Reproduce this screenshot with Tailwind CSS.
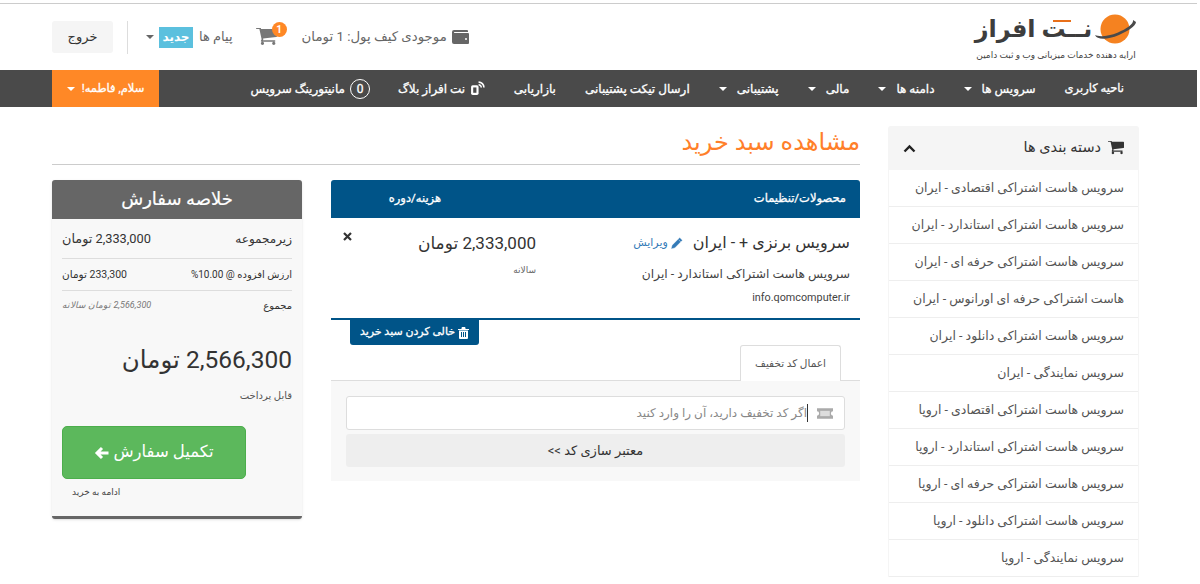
<!DOCTYPE html>
<html lang="fa" dir="rtl">
<head>
    <meta charset="UTF-8">
    <title>مشاهده سبد خرید - نت افراز</title>
    <script src="https://cdn.jsdelivr.net/npm/@tailwindcss/browser@4"></script>
</head>
<body class="bg-white h-[584px] overflow-hidden font-['Roboto','DejaVu_Sans',sans-serif] text-[#333]">
<div class="w-[1197px] h-[584px] overflow-hidden border-t border-[#ccc] mt-[3px] mr-auto ml-0">

    <!-- Top header -->
    <header class="h-[66px] pr-[58px] pl-[52px] flex items-center justify-between">
        <div class="w-[166px] flex flex-col items-center mt-[-1px]">
            <div class="flex items-center gap-[3px] h-[34px] whitespace-nowrap">
                <svg width="42" height="30" viewBox="0 0 42 30" class="shrink-0">
                    <circle cx="20" cy="15" r="14.500" fill="#f58220"/>
                    <path d="M0 21C2 26 12 26 24 21 32 17.500 41 12 41 8L38 6C39 10 31 15 23 18.500 13 22.500 4 23 0 21Z" fill="#4a4a4a"/>
                </svg>
                <span class="relative text-[24px] leading-none font-bold text-[#3d3d3d]">نــت افراز<span class="absolute top-[3px] right-[21px] w-[18px] h-[2px] bg-[#e8701a]"></span></span>
            </div>
            <span class="text-[9px] leading-[14px] text-[#444] mt-[2px] whitespace-nowrap">ارایه دهنده خدمات میزبانی وب و ثبت دامین</span>
        </div>
        <div class="flex items-center text-[13px] text-[#666]">
            <div class="flex items-center gap-[5px]">
                <svg width="17" height="16" viewBox="0 0 17 16"><path d="M2 1h13a1 1 0 0 1 1 1v1H2.500a.5.5 0 0 0 0 1H16a1 1 0 0 1 1 1v9a1 1 0 0 1-1 1H2a2 2 0 0 1-2-2V3a2 2 0 0 1 2-2z" fill="#666"/><circle cx="14" cy="10" r="1" fill="#fff"/></svg>
                <span class="text-[13.300px]">موجودی کیف پول: 1 تومان</span>
            </div>
            <div class="relative mr-[25px] w-[21px] h-[18px]">
                <svg width="21" height="18" viewBox="0 240 1664 1310"><path fill="#777" d="M640 1408q0 52-38 90t-90 38-90-38-38-90 38-90 90-38 90 38 38 90zm896 0q0 52-38 90t-90 38-90-38-38-90 38-90 90-38 90 38 38 90zm128-1088v512q0 24-16.500 42.500t-40.500 21.500l-1044 122q13 60 13 70 0 16-24 64h920q26 0 45 19t19 45-19 45-45 19h-1024q-26 0-45-19t-19-45q0-11 8-31.500t16-36 21.500-40 15.500-29.500l-177-823h-204q-26 0-45-19t-19-45 19-45 45-19h256q16 0 28.500 6.500t19.500 15.500 13 24.500 8 26 5.500 29.500 4.500 26h1201q26 0 45 19t19 45z"/></svg>
                <span class="absolute -top-[6px] -right-[10px] w-[15px] h-[15px] rounded-full bg-[#ff8826] text-white text-[10px] font-bold leading-[15px] text-center">1</span>
            </div>
            <span class="mr-[23px]">پیام ها</span>
            <span class="mr-[6px] w-[34px] h-[21px] bg-[#5bc0de] text-white text-[12px] font-bold leading-[21px] text-center">جدید</span>
            <span class="mr-[5px] w-0 h-0 border-x-[4px] border-x-transparent border-t-[4px] border-t-[#666]"></span>
            <span class="mr-[18px] w-px h-[33px] bg-[#ddd]"></span>
            <a class="mr-[14px] w-[61px] h-[32px] rounded-[3px] bg-[#f5f5f5] text-[#333] leading-[32px] text-center">خروج</a>
        </div>
    </header>

    <!-- Main nav -->
    <nav class="h-[37px] bg-[#4a4a4a] pr-[58px] pl-[52px] flex items-stretch justify-between text-white text-[12px] [-webkit-text-stroke:0.3px_white] whitespace-nowrap">
        <ul class="flex items-center">
            <li class="pr-[15px] pl-[14.500px] text-[11.500px]">ناحیه کاربری</li>
            <li class="px-[14.500px] flex items-center gap-[10px]">سرویس ها<span class="w-0 h-0 border-x-[4px] border-x-transparent border-t-[4px] border-t-white"></span></li>
            <li class="px-[14.500px] flex items-center gap-[10px]">دامنه ها<span class="w-0 h-0 border-x-[4px] border-x-transparent border-t-[4px] border-t-white"></span></li>
            <li class="px-[14.500px] flex items-center gap-[10px]">مالی<span class="w-0 h-0 border-x-[4px] border-x-transparent border-t-[4px] border-t-white"></span></li>
            <li class="px-[14.500px] flex items-center gap-[10px]">پشتیبانی<span class="w-0 h-0 border-x-[4px] border-x-transparent border-t-[4px] border-t-white"></span></li>
            <li class="px-[14.500px]">ارسال تیکت پشتیبانی</li>
            <li class="px-[14.500px]">بازاریابی</li>
            <li class="px-[14px] flex items-center gap-[5px]">
                <svg width="15" height="15" viewBox="0 0 14 14"><rect x="1" y="4" width="7" height="9" rx="1.500" fill="#fff" stroke="none"/><rect x="3" y="6" width="3" height="5" fill="#4a4a4a" stroke="none"/><path d="M8 1a5 5 0 0 1 5 5M8 3.500A2.500 2.500 0 0 1 10.500 6" fill="none" stroke="#fff" stroke-width="1.500"/></svg>
                نت افراز بلاگ
            </li>
            <li class="px-[14px] flex items-center gap-[5px]">
                <span class="w-[20px] h-[20px] rounded-full border border-white text-center leading-[18px]">0</span>
                مانیتورینگ سرویس
            </li>
        </ul>
        <div class="w-[107px] bg-[#ff8826] flex items-center justify-center gap-[7px] text-[11.500px]">
            سلام, فاطمه!
            <span class="w-0 h-0 border-x-[4px] border-x-transparent border-t-[4px] border-t-white"></span>
        </div>
    </nav>

    <!-- Page body -->
    <div class="pr-[58px] pl-[52px] pt-[19px] flex gap-[28px]">

        <!-- Sidebar -->
        <aside class="w-[251px] shrink-0">
            <div class="h-[44px] bg-[#f5f5f5] rounded-t-[3px] flex items-center justify-between px-[15px] text-[14.500px] text-[#333]">
                <div class="flex items-center gap-[7px]">
                    <svg width="16" height="14" viewBox="0 240 1664 1310"><path fill="#333" d="M640 1408q0 52-38 90t-90 38-90-38-38-90 38-90 90-38 90 38 38 90zm896 0q0 52-38 90t-90 38-90-38-38-90 38-90 90-38 90 38 38 90zm128-1088v512q0 24-16.500 42.500t-40.500 21.500l-1044 122q13 60 13 70 0 16-24 64h920q26 0 45 19t19 45-19 45-45 19h-1024q-26 0-45-19t-19-45q0-11 8-31.500t16-36 21.500-40 15.500-29.500l-177-823h-204q-26 0-45-19t-19-45 19-45 45-19h256q16 0 28.500 6.500t19.500 15.500 13 24.500 8 26 5.500 29.500 4.500 26h1201q26 0 45 19t19 45z"/></svg>
                    <span>دسته بندی ها</span>
                </div>
                <svg width="13" height="9" viewBox="0 0 13 9"><path d="M1.500 7.500 6.500 2.500l5 5" fill="none" stroke="#222" stroke-width="2.400"/></svg>
            </div>
            <ul class="text-[12.500px] text-[#555] border-x border-[#f5f5f5]">
                <li class="h-[37px] leading-[36px] px-[14px] border-b border-[#eee] whitespace-nowrap">سرویس هاست اشتراکی اقتصادی - ایران</li>
                <li class="h-[37px] leading-[36px] px-[14px] border-b border-[#eee] whitespace-nowrap">سرویس هاست اشتراکی استاندارد - ایران</li>
                <li class="h-[37px] leading-[36px] px-[14px] border-b border-[#eee] whitespace-nowrap">سرویس هاست اشتراکی حرفه ای - ایران</li>
                <li class="h-[37px] leading-[36px] px-[14px] border-b border-[#eee] whitespace-nowrap">هاست اشتراکی حرفه ای اورانوس - ایران</li>
                <li class="h-[37px] leading-[36px] px-[14px] border-b border-[#eee] whitespace-nowrap">سرویس هاست اشتراکی دانلود - ایران</li>
                <li class="h-[37px] leading-[36px] px-[14px] border-b border-[#eee] whitespace-nowrap">سرویس نمایندگی - ایران</li>
                <li class="h-[37px] leading-[36px] px-[14px] border-b border-[#eee] whitespace-nowrap">سرویس هاست اشتراکی اقتصادی - اروپا</li>
                <li class="h-[37px] leading-[36px] px-[14px] border-b border-[#eee] whitespace-nowrap">سرویس هاست اشتراکی استاندارد - اروپا</li>
                <li class="h-[37px] leading-[36px] px-[14px] border-b border-[#eee] whitespace-nowrap">سرویس هاست اشتراکی حرفه ای - اروپا</li>
                <li class="h-[37px] leading-[36px] px-[14px] border-b border-[#eee] whitespace-nowrap">سرویس هاست اشتراکی دانلود - اروپا</li>
                <li class="h-[37px] leading-[36px] px-[14px] border-b border-[#eee] whitespace-nowrap">سرویس نمایندگی - اروپا</li>
            </ul>
        </aside>

        <main class="w-[808px] shrink-0">
            <h1 class="h-[39px] border-b border-[#ccc] text-[24px] leading-[32px] text-[#ff7f2a]">مشاهده سبد خرید</h1>

            <div class="mt-[15px] flex gap-[29px]">
                <!-- Cart -->
                <section class="w-[529px] shrink-0">
                    <div class="h-[38px] bg-[#005488] rounded-t-[3px] flex items-center text-white text-[11.500px] [-webkit-text-stroke:0.3px_white]">
                        <span class="w-[419px] pr-[14px]">محصولات/تنظیمات</span>
                        <span>هزینه/دوره</span>
                    </div>
                    <div class="h-[102px] border-b-2 border-[#005488] flex pt-[15px]">
                        <div class="w-[324px] pr-[10px]">
                            <div class="flex items-center h-[20px]">
                                <span class="text-[16px]">سرویس برنزی + - ایران</span>
                                <span class="mr-[10px] flex items-center gap-[3px] text-[11px] text-[#337ab7]">
                                    <svg width="12" height="12" viewBox="0 0 11 11"><path d="M8 .5 10.500 3l-7 7L0 11l1-3.500zM7 2.500 9 4.500" fill="#337ab7" stroke="#fff" stroke-width=".4"/></svg>
                                    ویرایش
                                </span>
                            </div>
                            <p class="text-[12.250px] leading-[18px] mt-[12px] text-[#444]">سرویس هاست اشتراکی استاندارد - ایران</p>
                            <p dir="ltr" class="text-right text-[10.800px] leading-[14px] mt-[8px] text-[#444]">info.qomcomputer.ir</p>
                        </div>
                        <div class="w-[192px]">
                            <div class="text-[17px] leading-[20px]">2,333,000 تومان</div>
                            <div class="text-[9px] leading-[12px] mt-[11px] text-[#666]">سالانه</div>
                        </div>
                        <svg class="mr-[-8px] mt-[-1px]" width="9" height="9" viewBox="0 0 9 9"><path d="M1 1l7 7M8 1 1 8" stroke="#333" stroke-width="2.200"/></svg>
                    </div>
                    <div class="flex justify-end pl-[19px]">
                        <button class="w-[129px] h-[25px] bg-[#005488] rounded-b-[3px] text-white text-[11px] [-webkit-text-stroke:0.3px_white] flex items-center justify-center gap-[3px]">
                            <svg width="11" height="12" viewBox="0 0 11 12"><path d="M0 2h11v1H0zM3.500 1 4 0h3l.500 1v1h-4zM1 3.500h9V11a1 1 0 0 1-1 1H2a1 1 0 0 1-1-1z" fill="#fff" stroke="none"/><path d="M3.500 5v5M5.500 5v5M7.500 5v5" stroke="#005488"/></svg>
                            خالی کردن سبد خرید
                        </button>
                    </div>
                    <div class="h-[36px] border-b border-[#ddd] pr-[19px] flex">
                        <span class="w-[101px] h-[36px] bg-white border border-[#ddd] border-b-0 rounded-t-[3px] text-[10.500px] leading-[35px] text-center text-[#555]">اعمال کد تخفیف</span>
                    </div>
                    <div class="h-[100px] bg-[#f8f8f8] px-[15px] pt-[15px]">
                        <div class="h-[34px] bg-white border border-[#ddd] rounded-[3px] flex items-center pr-[11px] gap-[9px] text-[12px] text-[#888]">
                            <svg width="16" height="11" viewBox="0 0 15 10"><path d="M0 0h15v3a2 2 0 0 0 0 4v3H0V7a2 2 0 0 0 0-4z" fill="#aaa"/><rect x="3" y="2.500" width="9" height="5" fill="#ddd"/></svg>
                            <span class="w-px h-[18px] bg-[#333] -ml-[9px]"></span>
                            <span>اگر کد تخفیف دارید، آن را وارد کنید</span>
                        </div>
                        <button class="w-full h-[33px] mt-[4px] bg-[#eee] rounded-[3px] text-[13px] text-[#333]">معتبر سازی کد &gt;&gt;</button>
                    </div>
                </section>

                <!-- Order summary -->
                <section class="w-[250px] h-[339px] shrink-0 bg-[#f8f8f8] border-b-[3px] border-[#666] rounded-[3px] shadow-sm">
                    <h2 class="h-[39px] bg-[#666] rounded-t-[3px] text-white text-[18px] [-webkit-text-stroke:0.2px_white] leading-[37px] text-center">خلاصه سفارش</h2>
                    <div class="px-[10px]">
                        <div class="h-[40px] border-b border-[#ddd] flex items-center justify-between text-[12px]"><span>زیرمجموعه</span><span class="text-[12.800px]">2,333,000 تومان</span></div>
                        <div class="h-[32px] border-b border-[#ddd] flex items-center justify-between text-[10px]"><span>ارزش افزوده @ 10.00%</span><span class="text-[10.500px]">233,300 تومان</span></div>
                        <div class="h-[29px] flex items-center justify-between text-[10px]"><span>مجموع</span><span class="italic text-[9px] text-[#777]">2,566,300 تومان سالانه</span></div>
                        <div class="mt-[24px] text-[24.500px] leading-[32px] text-[#333]">2,566,300 تومان</div>
                        <div class="mt-[13px] text-[10px] leading-[14px] text-[#555]">قابل پرداخت</div>
                    </div>
                    <button class="mr-[56px] mt-[23px] w-[184px] h-[53px] bg-[#5cb85c] border border-[#4cae4c] rounded-[5px] text-white text-[16.500px] flex items-center justify-center gap-[4px]">
                        تکمیل سفارش
                        <svg width="15" height="14" viewBox="0 0 15 14"><path d="M14.500 7H3M8 2 3 7l5 5" fill="none" stroke="#fff" stroke-width="3"/></svg>
                    </button>
                    <div class="pl-[20px] mt-[7px] text-left text-[9px] leading-[12px] text-[#444]">ادامه به خرید</div>
                </section>
            </div>
        </main>
    </div>
</div>
</body>
</html>
